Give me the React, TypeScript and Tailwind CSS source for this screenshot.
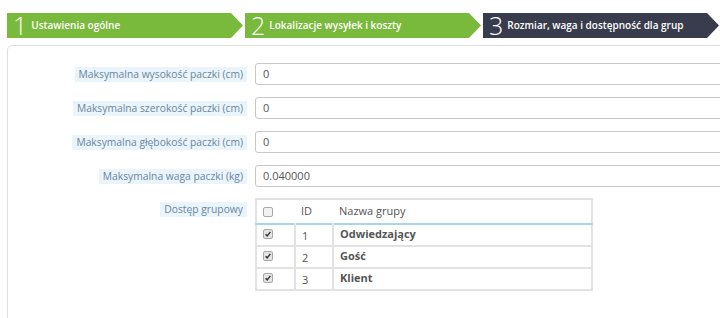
import React from 'react';

const steps = [
  {n: '1', label: 'Ustawienia ogólne', dark: false},
  {n: '2', label: 'Lokalizacje wysyłek i koszty', dark: false},
  {n: '3', label: 'Rozmiar, waga i dostępność dla grup', dark: true},
];

const fields = [
  {label: 'Maksymalna wysokość paczki (cm)', value: '0'},
  {label: 'Maksymalna szerokość paczki (cm)', value: '0'},
  {label: 'Maksymalna głębokość paczki (cm)', value: '0'},
  {label: 'Maksymalna waga paczki (kg)', value: '0.040000'},
];

const groups = [
  {id: '1', name: 'Odwiedzający'},
  {id: '2', name: 'Gość'},
  {id: '3', name: 'Klient'},
];

const Box = ({checked}: {checked: boolean}) => (
  <span
    className={
      'flex h-[10px] w-[10px] items-center justify-center rounded-[2px] border border-[#a9a9a9] ' +
      (checked ? 'bg-[#e4e4e4]' : 'bg-[#f1f1f1]')
    }>
    {checked && (
      <svg viewBox="0 0 10 10" className="h-[8px] w-[8px]">
        <path d="M2 5.2 L4 7.4 L8 2.4" fill="none" stroke="#333" strokeWidth="1.8" />
      </svg>
    )}
  </span>
);

export default function App(): React.JSX.Element {
  return (
    <div className="h-[318px] w-[720px] overflow-hidden bg-white font-['Open_Sans',sans-serif]">
      {/* Wizard steps */}
      <div className="flex gap-[2px] pt-[13px] pl-[7px]">
        {steps.map((s) => (
          <div
            key={s.n}
            className={
              'flex h-[25px] w-[236px] items-center gap-[4px] pl-[6px] text-white [clip-path:polygon(0_0,calc(100%-12px)_0,100%_50%,calc(100%-12px)_100%,0_100%)] ' +
              (s.dark ? 'bg-[#383c4d]' : 'bg-[#79b93c]')
            }>
            <span className="text-[25px] leading-none font-light">{s.n}</span>
            <span className="text-[10px] font-semibold">{s.label}</span>
          </div>
        ))}
      </div>

      {/* Form card */}
      <div className="mt-[7px] ml-[7px] h-[300px] w-[780px] rounded-[5px] border border-[#dedede] pt-[17px]">
        <div className="flex flex-col gap-[12px]">
          {fields.map((f) => (
            <div key={f.label} className="flex items-center">
              <div className="flex w-[239px] justify-end">
                <span className="bg-[#eaf4fb] px-[4px] text-[10.3px] leading-[15px] text-[#6b84a0]">
                  {f.label}
                </span>
              </div>
              <div className="ml-[8px] flex h-[22px] flex-1 items-center rounded-[3px] border border-[#c8c8c8] pl-[7px] text-[11px] text-[#555]">
                {f.value}
              </div>
            </div>
          ))}

          <div className="-mt-[1px] flex items-start">
            <div className="flex w-[239px] justify-end pt-[4px]">
              <span className="bg-[#eaf4fb] px-[4px] text-[10.3px] leading-[15px] text-[#6b84a0]">
                Dostęp grupowy
              </span>
            </div>
            <table className="ml-[8px] w-[338px] border-collapse border-2 border-[#e2e2e2] text-[11px] text-[#555]">
              <thead>
                <tr className="h-[25px] border-b-2 border-[#a6d5ef]">
                  <th className="w-[39px] pl-[6px] text-left font-normal">
                    <Box checked={false} />
                  </th>
                  <th className="w-[38px] pl-[6px] text-left font-normal">ID</th>
                  <th className="pl-[6px] text-left font-normal">Nazwa grupy</th>
                </tr>
              </thead>
              <tbody>
                {groups.map((g) => (
                  <tr key={g.id} className="h-[22px] border-b-2 border-[#e2e2e2]">
                    <td className="border-r-2 border-[#e2e2e2] pl-[6px] align-top pt-[4px]">
                      <Box checked />
                    </td>
                    <td className="border-r-2 border-[#e2e2e2] pl-[6px] pt-[3px]">{g.id}</td>
                    <td className="pl-[6px] align-top pt-[1px] font-bold">{g.name}</td>
                  </tr>
                ))}
              </tbody>
            </table>
          </div>
        </div>
      </div>
    </div>
  );
}
